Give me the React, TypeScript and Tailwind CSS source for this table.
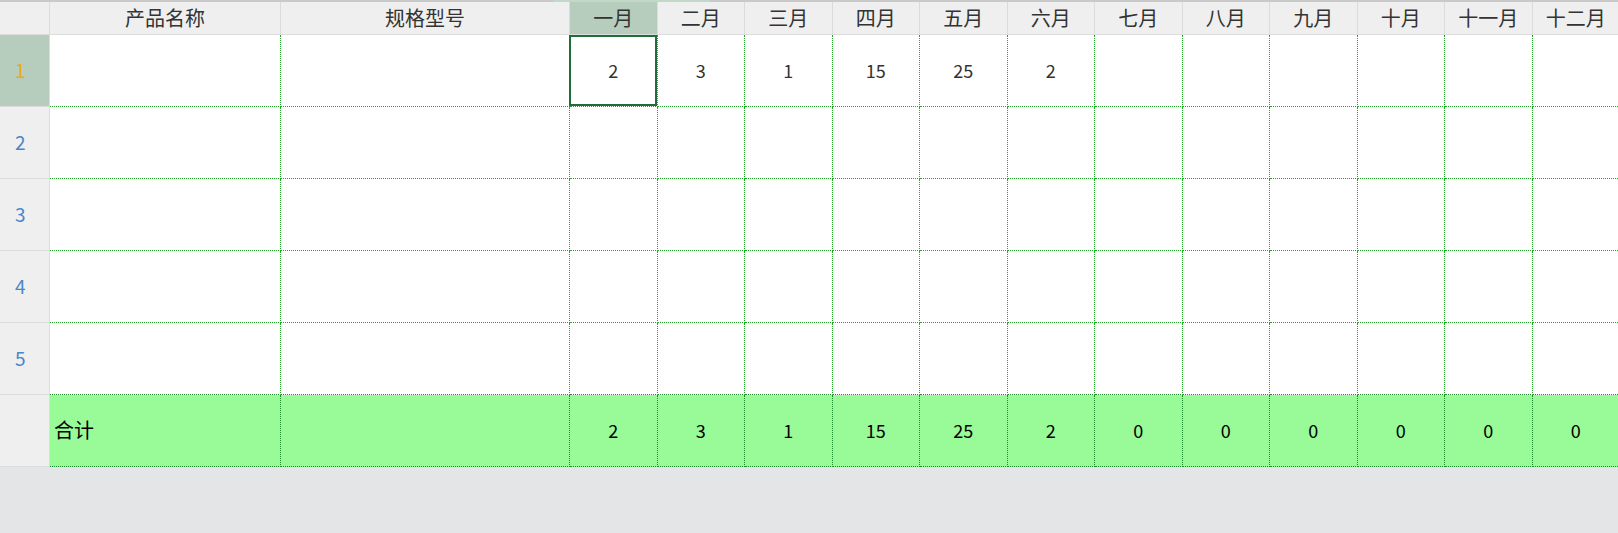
import React from "react";

const months = ["一月", "二月", "三月", "四月", "五月", "六月", "七月", "八月", "九月", "十月", "十一月", "十二月"];
const row1 = ["2", "3", "1", "15", "25", "2", "", "", "", "", "", ""];
const totals = ["2", "3", "1", "15", "25", "2", "0", "0", "0", "0", "0", "0"];

const font = { fontFamily: '"Noto Sans CJK SC", "Noto Sans", sans-serif' };

export default function App() {
  return (
    <div className="w-[1618px] h-[533px] bg-[#e4e5e7] overflow-hidden" style={font}>
      {/* top strip */}
      <div className="flex h-[2px]">
        <div className="w-[553px] bg-[#c9c9c9]" />
        <div className="w-[157px] bg-[#c3d8c8]" />
        <div className="flex-1 bg-[#c9c9c9]" />
      </div>
      <div className="grid grid-cols-[50px_231px_289px_repeat(12,87.5px)] grid-rows-[33px_repeat(6,72px)] w-[1620px]">
        {/* header row */}
        <div className="bg-[#efefef] border-r border-b border-[#dcdcdc]" />
        <div className="bg-[#efefef] border-r border-b border-[#dcdcdc] flex items-center justify-center text-[20px] text-[#333] leading-none">产品名称</div>
        <div className="bg-[#efefef] border-r border-b border-[#dcdcdc] flex items-center justify-center text-[20px] text-[#333] leading-none">规格型号</div>
        {months.map((m, i) => (
          <div
            key={m}
            className={`${i === 0 ? "bg-[#b6cdbe]" : "bg-[#efefef]"} border-r border-b border-[#dcdcdc] flex items-center justify-center text-[20px] text-[#333] leading-none whitespace-nowrap`}
          >
            {m}
          </div>
        ))}

        {/* data rows */}
        {[1, 2, 3, 4, 5].map((r) => {
          const bottom = r === 5 ? "border-[#1f8a2c]" : "border-[#22a62a]";
          return (
            <React.Fragment key={r}>
              <div
                className={`${r === 1 ? "bg-[#b6cdbe] text-[#f0a51c]" : "bg-[#efefef] text-[#4a86c8]"} border-r border-b border-[#dcdcdc] flex items-center pl-[15px] pb-[3px] text-[19px] leading-none`}
              >
                {r}
              </div>
              <div className={`bg-white border-r border-b border-dotted border-r-[#22a62a] ${bottom}`} />
              <div className={`bg-white border-r border-b border-dotted border-r-[#22a62a] ${bottom}`} />
              {months.map((m, i) => (
                <div
                  key={m}
                  className={`relative bg-white border-r border-b border-dotted border-r-[#22a62a] ${bottom} flex items-center justify-center pb-[2px] text-[18px] text-[#333] leading-none`}
                >
                  {r === 1 ? row1[i] : ""}
                  {r === 1 && i === 0 && (
                    <div className="absolute -left-[1px] top-0 right-0 bottom-0 border-2 border-[#1f6e38]" />
                  )}
                </div>
              ))}
            </React.Fragment>
          );
        })}

        {/* total row */}
        <div className="bg-[#efefef] border-r border-b border-[#dcdcdc]" />
        <div className="bg-[#98fb98] border-r border-b border-dotted border-[#1f8a2c] flex items-center pl-[4px] pb-[2px] text-[20px] text-black leading-none">合计</div>
        <div className="bg-[#98fb98] border-r border-b border-dotted border-[#1f8a2c]" />
        {totals.map((t, i) => (
          <div
            key={i}
            className="bg-[#98fb98] border-r border-b border-dotted border-[#1f8a2c] flex items-center justify-center pb-[2px] text-[18px] text-black leading-none"
          >
            {t}
          </div>
        ))}
      </div>
    </div>
  );
}
